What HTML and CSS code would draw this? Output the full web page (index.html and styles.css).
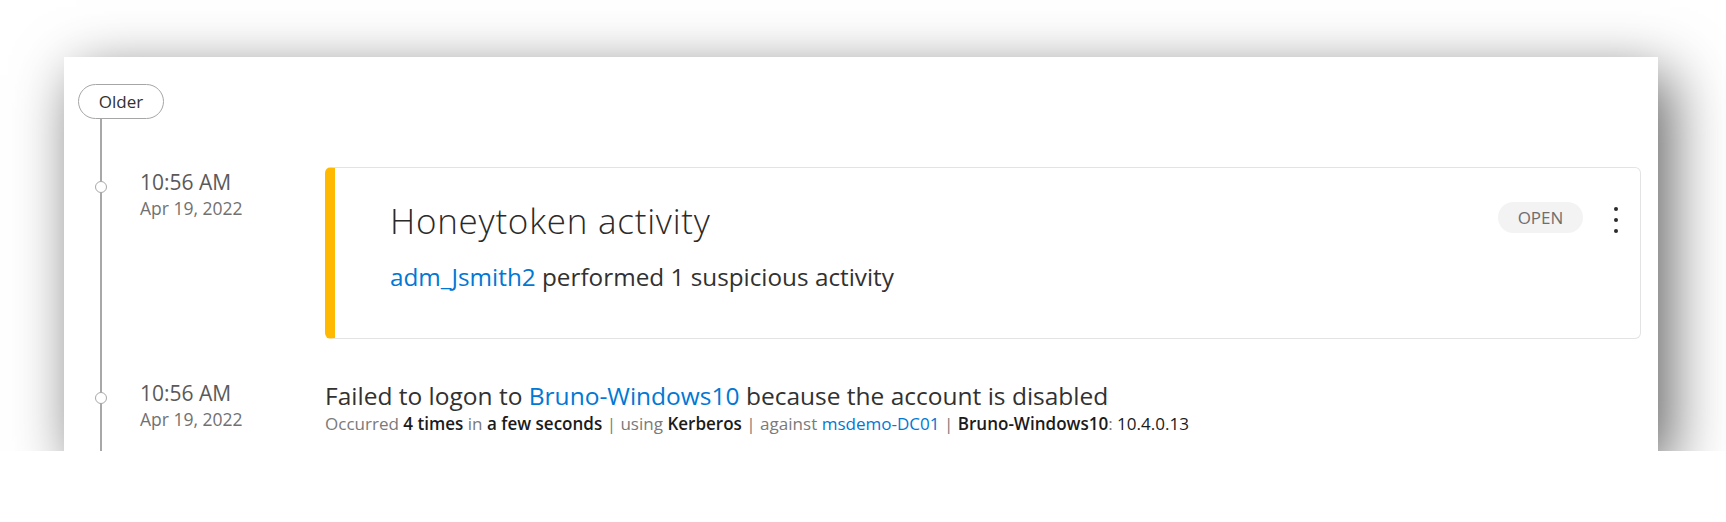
FILE: index.html
```html
<!DOCTYPE html>
<html lang="en">
<head>
<meta charset="utf-8">
<title>Timeline</title>
<link rel="stylesheet" href="styles.css">
</head>
<body>
<div class="page">
  <section class="panel">
    <div class="older">Older</div>
    <div class="rail">
      <div class="row row-alert">
        <span class="node"></span>
        <div class="when">
          <div class="time">10:56 AM</div>
          <div class="date">Apr 19, 2022</div>
        </div>
        <div class="card">
          <div class="card-head">
            <h2 class="title">Honeytoken activity</h2>
            <span class="status">OPEN</span>
            <span class="kebab"><i></i><i></i><i></i></span>
          </div>
          <p class="summary"><a class="link">adm_Jsmith2</a> performed 1 suspicious activity</p>
        </div>
      </div>
      <div class="row row-event">
        <span class="node"></span>
        <div class="when">
          <div class="time">10:56 AM</div>
          <div class="date">Apr 19, 2022</div>
        </div>
        <div class="event">
          <div class="event-title">Failed to logon to <a class="link">Bruno-Windows10</a> because the account is disabled</div>
          <div class="event-meta">Occurred <b>4 times</b> in <b>a few seconds</b> | using <b>Kerberos</b> | against <a class="link">msdemo-DC01</a> | <b>Bruno-Windows10</b>: <span class="dark">10.4.0.13</span></div>
        </div>
      </div>
    </div>
  </section>
</div>
</body>
</html>
```

FILE: styles.css
```css
html, body {
  margin: 0;
  padding: 0;
  background: #ffffff;
}

body {
  font-family: "Open Sans", "Noto Sans", "Liberation Sans", sans-serif;
  color: #323130;
}

.page {
  padding: 57px 0 0 64px;
}

.panel {
  box-sizing: border-box;
  width: 1594px;
  height: 394px;
  overflow: hidden;
  background: #ffffff;
  padding: 27px 17px 0 14px;
  display: flex;
  flex-direction: column;
  box-shadow: 12px 18px 56px rgba(0, 0, 0, 0.62);
}

.older {
  box-sizing: border-box;
  width: 86px;
  height: 35px;
  border: 1px solid #a6a6a6;
  border-radius: 18px;
  display: flex;
  align-items: center;
  justify-content: center;
  font-size: 17px;
  color: #323130;
  flex: none;
}

.rail {
  flex: 1;
  margin-left: 22px;
  border-left: 2px solid #a8a8a8;
}

.row {
  display: flex;
  align-items: flex-start;
}

.row-alert {
  margin-top: 48px;
}

.row-alert .node,
.row-alert .when {
  margin-top: 2px;
}

.row-event {
  margin-top: 41px;
}

.node {
  box-sizing: border-box;
  flex: none;
  width: 12px;
  height: 12px;
  margin-left: -7px;
  margin-right: 33px;
  border: 1.5px solid #a8a8a8;
  border-radius: 50%;
  background: #ffffff;
  position: relative;
  top: 12px;
}

.when {
  flex: none;
  width: 185px;
}

.time {
  font-size: 21px;
  line-height: 26px;
  color: #5a5a5a;
}

.date {
  margin-top: 1px;
  font-size: 17.5px;
  line-height: 25px;
  color: #717171;
}

.card {
  flex: 1;
  box-sizing: border-box;
  border: 1px solid #e3e3e3;
  border-left: 10px solid #ffb900;
  border-radius: 6px;
  padding: 31px 22px 45px 55px;
}

.card-head {
  display: flex;
  align-items: flex-start;
}

.title {
  flex: 1;
  margin: 0;
  font-size: 35px;
  line-height: 44px;
  font-weight: 300;
  letter-spacing: 0.75px;
  color: #2b2a29;
}

.status {
  margin-top: 3px;
  width: 85px;
  height: 31px;
  border-radius: 16px;
  background: #f3f3f3;
  color: #6e6e6e;
  font-size: 17px;
  display: flex;
  align-items: center;
  justify-content: center;
}

.kebab {
  margin-top: 8px;
  margin-left: 31px;
  display: flex;
  flex-direction: column;
  gap: 7px;
}

.kebab i {
  display: block;
  width: 4px;
  height: 4px;
  border-radius: 50%;
  background: #2b2b2b;
}

.summary {
  margin: 18px 0 0 0;
  font-size: 24.3px;
  line-height: 32px;
  color: #323130;
}

.link {
  color: #0078d4;
  text-decoration: none;
}

.event {
  flex: 1;
}

.event-title {
  font-size: 24.5px;
  line-height: 32px;
  color: #323130;
}

.event-meta {
  font-size: 17.05px;
  line-height: 24px;
  color: #7a7a7a;
}

.event-meta b {
  font-weight: 600;
  color: #1b1b1b;
}

.event-meta .dark {
  color: #1b1b1b;
}
```
